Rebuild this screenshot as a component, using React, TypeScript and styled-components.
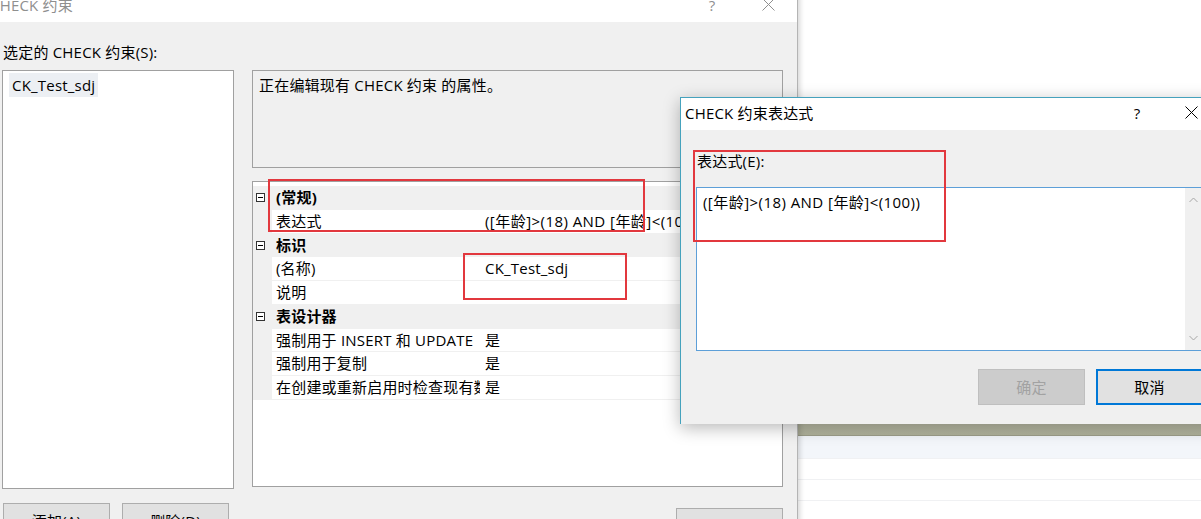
import React from "react";
import styled, { createGlobalStyle } from "styled-components";

const GlobalStyle = createGlobalStyle`
  html, body { margin: 0; padding: 0; background: #ffffff; }
  body {
    font-family: "Open Sans", "Noto Sans CJK SC", sans-serif;
    font-size: 15px;
    letter-spacing: 0.2px;
    color: #000;
  }
  * { box-sizing: border-box; }
`;

const Desktop = styled.div`
  position: relative;
  width: 1201px;
  height: 519px;
  overflow: hidden;
  background: #ffffff;
`;

/* ---------- background window (table designer behind) ---------- */
const BackWindow = styled.div`
  position: absolute;
  top: 0;
  left: 798px;
  right: 0;
  bottom: 0;
  display: flex;
  flex-direction: column;
  padding-top: 423px;
  background: #ffffff;
`;

const BeigeBar = styled.div`
  height: 13px;
  background: linear-gradient(#bbbda7, #b0b29b);
  border-bottom: 1px solid #9c9e89;
`;

const BackRow = styled.div<{ $tint?: boolean; $h: number }>`
  height: ${(p) => p.$h}px;
  background: ${(p) => (p.$tint ? "#f3f6fa" : "#ffffff")};
  border-bottom: 1px solid #f0f1f3;
`;

/* ---------- generic window parts ---------- */
const TitleBar = styled.div<{ $inactive?: boolean; $pad: number }>`
  height: 32px;
  flex: none;
  display: flex;
  align-items: center;
  background: #ffffff;
  padding-left: ${(p) => p.$pad}px;
  padding-bottom: 3px;
  color: ${(p) => (p.$inactive ? "#8f8f8f" : "#000")};
  line-height: 20px;
  white-space: nowrap;
`;

const TitleText = styled.div`
  flex: 1;
`;

const CaptionButtons = styled.div<{ $gap: number }>`
  display: flex;
  gap: ${(p) => p.$gap}px;
  padding-right: 6px;
`;

const CaptionButton = styled.div`
  width: 46px;
  height: 28px;
  display: flex;
  align-items: center;
  justify-content: center;
  font-size: 15px;
`;

const Button = styled.div<{ $variant?: "disabled" | "default" }>`
  width: 107px;
  height: 36px;
  flex: none;
  display: flex;
  align-items: center;
  justify-content: center;
  line-height: 20px;
  background: ${(p) => (p.$variant === "disabled" ? "#cccccc" : "#e1e1e1")};
  color: ${(p) => (p.$variant === "disabled" ? "#a2a2a2" : "#000")};
  border: ${(p) =>
    p.$variant === "default"
      ? "2px solid #0078d7"
      : p.$variant === "disabled"
      ? "1px solid #bfbfbf"
      : "1px solid #adadad"};
`;

/* ---------- main dialog ---------- */
const MainWindow = styled.div`
  position: absolute;
  left: -20px;
  top: -10px;
  width: 818px;
  height: 570px;
  display: flex;
  flex-direction: column;
  background: #f0f0f0;
  border-right: 1px solid #b4b4b4;
  box-shadow: 2px 0 5px rgba(0, 0, 0, 0.16);
`;

const MainBody = styled.div`
  flex: 1;
  display: flex;
  flex-direction: column;
  padding: 20px 14px 0 22px;
`;

const FieldLabel = styled.div<{ $gapBelow: number }>`
  line-height: 20px;
  padding-left: 1px;
  margin-bottom: ${(p) => p.$gapBelow}px;
  white-space: nowrap;
`;

const Columns = styled.div`
  display: grid;
  grid-template-columns: 232px 531px;
  column-gap: 18px;
`;

const Column = styled.div`
  display: flex;
  flex-direction: column;
`;

const ListBox = styled.div`
  height: 419px;
  background: #ffffff;
  border: 1px solid #a0a0a0;
  display: flex;
  flex-direction: column;
  align-items: flex-start;
`;

const ListItem = styled.div`
  margin: 2px 0 0 6px;
  height: 24px;
  line-height: 24px;
  padding: 0 3px;
  background: #eceff3;
`;

const ButtonRow = styled.div<{ $top: number; $gap: number; $end?: boolean }>`
  display: flex;
  gap: ${(p) => p.$gap}px;
  margin-top: ${(p) => p.$top}px;
  justify-content: ${(p) => (p.$end ? "flex-end" : "flex-start")};
  padding-left: ${(p) => (p.$end ? 0 : 1)}px;
`;

const DescBox = styled.div`
  height: 98px;
  border: 1px solid #a0a0a0;
  padding: 4px 6px;
  line-height: 20px;
  background: #f0f0f0;
`;

const PropGrid = styled.div`
  margin-top: 13px;
  height: 306px;
  border: 1px solid #a0a0a0;
  background: #ffffff;
  padding-top: 4px;
  overflow: hidden;
`;

const PropRow = styled.div<{ $category?: boolean }>`
  display: grid;
  grid-template-columns: 19px 208px 1fr;
  height: 23.75px;
  background: ${(p) => (p.$category ? "#f0f0f0" : "#ffffff")};
  font-weight: ${(p) => (p.$category ? 700 : 400)};
`;

const Strip = styled.div`
  background: #f0f0f0;
  display: flex;
  align-items: center;
  padding-left: 3px;
`;

const Cell = styled.div<{ $span?: boolean; $pad: number }>`
  grid-column: ${(p) => (p.$span ? "span 2" : "auto")};
  padding-left: ${(p) => p.$pad}px;
  line-height: 23px;
  white-space: nowrap;
  overflow: hidden;
  border-bottom: 1px solid #f0f0f0;
`;

const Formula = styled.span`
  letter-spacing: 0.45px;
`;

/* ---------- expression dialog ---------- */
const ExprWindow = styled.div`
  position: absolute;
  left: 680px;
  top: 97px;
  width: 540px;
  height: 327px;
  display: flex;
  flex-direction: column;
  background: #f0f0f0;
  border-left: 1px solid #45a2bd;
  border-top: 1px solid #45a2bd;
  box-shadow: 0 4px 16px rgba(0, 0, 0, 0.28);
`;

const ExprBody = styled.div`
  flex: 1;
  display: flex;
  flex-direction: column;
  padding: 21px 17px 19px 15px;
`;

const ExprArea = styled.div`
  height: 164px;
  display: flex;
  background: #ffffff;
  border: 1px solid #5d9fd8;
`;

const ExprText = styled.div`
  flex: 1;
  padding: 4px 6px;
  line-height: 20px;
  white-space: nowrap;
`;

const ScrollBar = styled.div`
  width: 17px;
  background: #f0f0f0;
  display: flex;
  flex-direction: column;
  justify-content: space-between;
  align-items: center;
`;

const ScrollArrow = styled.div`
  height: 24px;
  display: flex;
  align-items: center;
  justify-content: center;
`;

/* ---------- annotation overlays ---------- */
const RedMark = styled.div<{ $x: number; $y: number; $w: number; $h: number }>`
  position: absolute;
  left: ${(p) => p.$x}px;
  top: ${(p) => p.$y}px;
  width: ${(p) => p.$w}px;
  height: ${(p) => p.$h}px;
  border: 2px solid #e2383e;
  pointer-events: none;
`;

/* ---------- icons ---------- */
const CloseIcon = ({ color }: { color: string }) => (
  <svg width="13" height="13" viewBox="0 0 13 13">
    <path d="M0.5 0.5 L12.5 12.5 M12.5 0.5 L0.5 12.5" stroke={color} strokeWidth="1" fill="none" />
  </svg>
);

const Expander = () => (
  <svg width="9" height="9" viewBox="0 0 9 9">
    <rect x="0.5" y="0.5" width="8" height="8" fill="#fff" stroke="#333" strokeWidth="1" />
    <path d="M2 4.5 H7" stroke="#000" strokeWidth="1" />
  </svg>
);

const Chevron = ({ up }: { up?: boolean }) => (
  <svg width="9" height="6" viewBox="0 0 9 6">
    <polyline
      points={up ? "0.5,5 4.5,1 8.5,5" : "0.5,1 4.5,5 8.5,1"}
      stroke="#a6a6a6"
      strokeWidth="1"
      fill="none"
    />
  </svg>
);

const EXPR = "([年龄]>(18) AND [年龄]<(100))";

const sections: { title: string; rows: [string, string][] }[] = [
  { title: "(常规)", rows: [["表达式", EXPR]] },
  {
    title: "标识",
    rows: [
      ["(名称)", "CK_Test_sdj"],
      ["说明", ""],
    ],
  },
  {
    title: "表设计器",
    rows: [
      ["强制用于 INSERT 和 UPDATE", "是"],
      ["强制用于复制", "是"],
      ["在创建或重新启用时检查现有数据", "是"],
    ],
  },
];

export default function App() {
  return (
    <>
      <GlobalStyle />
      <Desktop>
        <BackWindow>
          <BeigeBar />
          <BackRow $tint $h={23} />
          <BackRow $h={21} />
          <BackRow $h={21} />
        </BackWindow>

        <MainWindow>
          <TitleBar $inactive $pad={10}>
            <TitleText>CHECK 约束</TitleText>
            <CaptionButtons $gap={10}>
              <CaptionButton>?</CaptionButton>
              <CaptionButton>
                <CloseIcon color="#8f8f8f" />
              </CaptionButton>
            </CaptionButtons>
          </TitleBar>
          <MainBody>
            <FieldLabel $gapBelow={8}>选定的 CHECK 约束(S):</FieldLabel>
            <Columns>
              <Column>
                <ListBox>
                  <ListItem>CK_Test_sdj</ListItem>
                </ListBox>
                <ButtonRow $top={14} $gap={12}>
                  <Button>添加(A)</Button>
                  <Button>删除(D)</Button>
                </ButtonRow>
              </Column>
              <Column>
                <DescBox>正在编辑现有 CHECK 约束 的属性。</DescBox>
                <PropGrid>
                  {sections.map((s) => (
                    <React.Fragment key={s.title}>
                      <PropRow $category>
                        <Strip>
                          <Expander />
                        </Strip>
                        <Cell $span $pad={4}>
                          {s.title}
                        </Cell>
                      </PropRow>
                      {s.rows.map(([name, value]) => (
                        <PropRow key={name}>
                          <Strip />
                          <Cell $pad={4}>{name}</Cell>
                          <Cell $pad={5}>
                            {value === EXPR ? <Formula>{value}</Formula> : value}
                          </Cell>
                        </PropRow>
                      ))}
                    </React.Fragment>
                  ))}
                </PropGrid>
                <ButtonRow $top={21} $gap={0} $end>
                  <Button>关闭(C)</Button>
                </ButtonRow>
              </Column>
            </Columns>
          </MainBody>
        </MainWindow>

        <ExprWindow>
          <TitleBar $pad={4}>
            <TitleText>CHECK 约束表达式</TitleText>
            <CaptionButtons $gap={8}>
              <CaptionButton>?</CaptionButton>
              <CaptionButton>
                <CloseIcon color="#000" />
              </CaptionButton>
            </CaptionButtons>
          </TitleBar>
          <ExprBody>
            <FieldLabel $gapBelow={16}>表达式(E):</FieldLabel>
            <ExprArea>
              <ExprText>
                <Formula>{EXPR}</Formula>
              </ExprText>
              <ScrollBar>
                <ScrollArrow>
                  <Chevron up />
                </ScrollArrow>
                <ScrollArrow>
                  <Chevron />
                </ScrollArrow>
              </ScrollBar>
            </ExprArea>
            <ButtonRow $top={18} $gap={11} $end>
              <Button $variant="disabled">确定</Button>
              <Button $variant="default">取消</Button>
            </ButtonRow>
          </ExprBody>
        </ExprWindow>

        <RedMark $x={268} $y={179} $w={377} $h={53} />
        <RedMark $x={463} $y={253} $w={164} $h={47} />
        <RedMark $x={693} $y={150} $w={253} $h={92} />
      </Desktop>
    </>
  );
}
